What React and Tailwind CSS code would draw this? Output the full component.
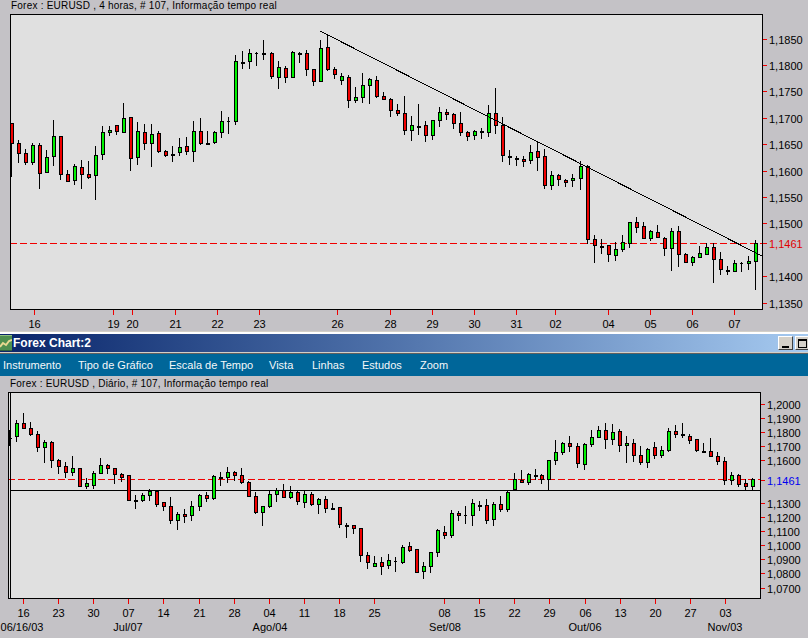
import React from "react";

const T1 = [[36,370,530,370,430,'r'],[57,420,488,430,460,'r'],[78,447,495,460,485,'r'],[99,430,494,436,485,'g'],[120,430,566,436,520,'r'],[141,450,520,472,517,'g'],[162,360,497,409,469,'g'],[183,409,539,409,523,'r'],[204,511,545,523,544,'r'],[225,493,554,499,541,'g'],[246,480,566,502,523,'r'],[267,483,536,523,530,'r'],[288,438,599,466,526,'g'],[309,378,479,397,463,'g'],[330,379,407,391,397,'g'],[351,376,404,376,394,'r'],[372,309,398,355,397,'g'],[393,352,512,352,475,'r'],[414,366,494,394,472,'g'],[435,373,449,397,430,'r'],[456,372,500,403,430,'g'],[477,394,460,400,454,'r'],[498,451,470,454,466,'r'],[519,438,485,461,461,'d'],[540,414,467,442,457,'g'],[561,411,464,439,454,'r'],[582,363,485,394,454,'g'],[603,354,434,394,430,'r'],[624,393,434,428,428,'d'],[645,394,431,397,427,'g'],[666,333,413,364,397,'g'],[687,351,402,364,364,'t'],[708,166,374,184,364,'g'],[729,153,206,185,185,'d'],[750,148,206,160,184,'g'],[771,157,197,158,158,'t'],[792,121,179,158,158,'d']];
const T2 = [[6,157,236,160,229,'r'],[27,184,266,202,232,'g'],[48,199,250,205,232,'r'],[69,154,232,157,232,'g'],[90,157,188,158,158,'d'],[111,151,227,160,208,'r'],[132,208,257,208,244,'r'],[153,120,244,145,244,'g'],[174,106,212,142,208,'r'],[195,202,236,208,223,'r'],[216,220,254,229,241,'g'],[237,226,323,232,301,'r'],[258,262,308,292,301,'g'],[279,220,308,256,292,'g'],[300,235,311,238,256,'g'],[321,229,293,241,287,'r'],[342,277,299,289,298,'r'],[363,295,350,298,331,'r'],[384,312,349,331,340,'r'],[405,289,404,340,391,'r'],[426,349,422,376,391,'g'],[447,313,404,378,378,'d'],[468,364,425,376,406,'r'],[489,361,419,361,406,'g'],[510,322,380,337,361,'g'],[531,328,359,337,343,'r'],[552,340,386,343,370,'r'],[573,337,407,370,397,'r'],[594,394,422,397,409,'r'],[615,391,419,394,406,'g'],[636,385,418,392,392,'d'],[657,316,410,340,397,'g'],[678,265,401,340,376,'r'],[699,352,485,376,466,'r'],[720,451,494,467,467,'d'],[741,469,497,473,473,'d'],[762,469,500,476,484,'r'],[783,436,491,457,481,'g'],[804,426,512,454,472,'r']];
const T3 = [[21,58,176,79,166,'r'],[42,124,179,136,166,'g'],[63,133,167,136,148,'r'],[84,148,170,149,155,'r'],[105,133,170,145,151,'g'],[129,94,179,109,145,'g'],[150,106,341,109,328,'r'],[171,316,398,328,346,'r'],[192,327,373,347,347,'d'],[213,346,395,346,373,'r'],[234,337,392,358,376,'g'],[255,316,367,337,358,'g'],[276,277,355,277,340,'g'],[297,261,310,277,290,'r'],[318,277,328,289,325,'r'],[339,300,334,304,325,'g'],[360,285,325,307,322,'r'],[381,322,377,325,355,'r'],[402,294,422,304,355,'g'],[423,288,410,304,373,'r'],[444,369,400,373,397,'r'],[465,379,407,382,397,'g'],[486,348,385,370,382,'g'],[507,340,373,352,373,'g'],[528,340,458,352,388,'r'],[549,366,434,388,418,'r'],[570,408,434,420,420,'d'],[591,390,425,400,424,'g'],[612,395,425,399,399,'t'],[633,379,419,394,400,'g'],[654,331,479,340,394,'g']];
const B1 = [[51,90,155,100,139,'g'],[72,69,118,100,115,'r'],[93,97,139,115,133,'r'],[114,124,185,133,172,'r'],[135,151,218,157,172,'g'],[156,154,233,157,211,'r'],[177,208,251,211,229,'r'],[198,217,263,229,247,'r'],[219,198,257,235,247,'g'],[240,235,290,235,287,'r'],[261,265,296,280,287,'g'],[282,244,296,250,284,'g'],[303,205,250,226,250,'g'],[324,223,251,226,235,'r'],[345,235,281,235,253,'r'],[366,250,275,253,260,'r'],[387,256,331,256,331,'r'],[408,315,356,329,329,'d'],[429,309,335,316,331,'g'],[450,298,333,304,316,'g'],[471,301,350,304,341,'r'],[492,335,362,337,349,'r'],[513,322,401,349,391,'r'],[534,367,419,373,391,'g'],[555,357,398,373,379,'r'],[576,334,392,349,376,'g'],[600,313,362,316,349,'g'],[621,307,335,316,325,'r'],[642,255,331,259,325,'g'],[663,246,287,260,260,'d'],[684,232,278,247,262,'g'],[705,244,272,247,256,'r'],[726,235,281,256,277,'r'],[747,274,322,277,319,'r'],[768,307,371,319,367,'r'],[789,349,407,349,367,'g']];
const B2 = [[0,300,355,313,347,'g'],[21,295,335,301,313,'g'],[42,283,325,301,322,'r'],[63,289,328,307,322,'g'],[84,304,344,307,334,'r'],[105,304,353,313,337,'g'],[126,307,347,313,343,'r'],[147,325,371,328,343,'g'],[168,319,368,328,355,'r'],[189,340,361,353,353,'d'],[210,352,413,352,403,'r'],[231,400,443,404,404,'d'],[252,404,431,406,415,'r'],[273,413,515,415,496,'r'],[294,487,536,496,517,'r'],[315,498,530,520,527,'g'],[336,501,554,517,527,'r'],[357,492,536,511,526,'g'],[378,501,545,514,514,'t'],[399,465,521,472,515,'g'],[420,456,485,469,479,'r'],[441,478,547,478,547,'r'],[462,517,566,529,544,'g'],[483,487,548,487,529,'g'],[504,418,500,421,487,'g'],[525,408,446,427,436,'r'],[546,361,443,370,436,'g'],[567,364,394,370,376,'r'],[588,349,401,376,376,'t'],[609,327,407,340,376,'g'],[630,334,362,344,344,'d'],[651,327,401,346,391,'r'],[672,337,407,343,388,'g'],[693,317,367,343,358,'r'],[714,304,365,307,358,'g'],[735,250,301,268,298,'g'],[756,239,280,270,277,'r'],[777,250,284,253,277,'g'],[798,237,271,255,255,'d']];
const B3 = [[14,252,281,256,268,'r'],[35,210,301,211,268,'g'],[56,150,225,187,211,'g'],[77,157,195,160,187,'g'],[98,138,186,160,169,'r'],[122,160,233,169,220,'r'],[143,160,240,163,223,'g'],[164,120,170,142,163,'g'],[185,108,144,121,142,'g'],[206,99,177,121,148,'r'],[227,102,166,127,148,'g'],[248,118,187,124,166,'r'],[269,138,218,160,166,'g'],[290,147,216,160,196,'r'],[311,168,224,196,217,'r'],[332,175,233,178,217,'g'],[353,156,208,172,196,'r'],[374,168,204,181,196,'g'],[395,114,187,124,181,'g'],[416,105,144,124,131,'r'],[437,99,143,131,131,'d'],[458,133,161,139,151,'r'],[479,148,187,148,181,'r'],[500,160,186,183,183,'d'],[521,144,202,184,199,'r'],[542,186,226,199,214,'r'],[563,201,284,214,271,'r'],[584,247,284,256,271,'g'],[605,253,292,256,281,'r'],[626,268,301,280,289,'r'],[647,265,304,268,287,'g']];

const conv = (arr, ox, oy) => arr.map(([x, hi, lo, t, b, k]) => ({
  cx: Math.floor(ox + x / 3),
  hi: Math.round(oy + hi / 3),
  lo: Math.round(oy + lo / 3),
  t: Math.round(oy + t / 3),
  b: Math.round(oy + b / 3),
  k,
}));

const topCandles = [...conv(T1, 0, 0), ...conv(T2, 270, 0), ...conv(T3, 538, 130)];
const botCandles = [...conv(B1, 0, 390), ...conv(B2, 270, 390), ...conv(B3, 538, 390)];

const RED = "#f00000";
const GREEN = "#00f000";

function Candle({ c }) {
  return (
    <g>
      <rect x={c.cx - 1} y={c.hi} width={1} height={c.lo - c.hi} fill="#000" />
      {c.k === "d" && <rect x={c.cx - 2} y={c.t} width={4} height={2} fill="#000" />}
      {c.k === "t" && <rect x={c.cx - 2} y={c.t} width={3} height={1} fill="#000" />}
      {(c.k === "r" || c.k === "g") && (
        <>
          <rect x={c.cx - 2} y={c.t} width={4} height={c.b - c.t + 1} fill="#000" />
          <rect x={c.cx - 1} y={c.t + 1} width={2} height={Math.max(c.b - c.t - 1, 0)} fill={c.k === "r" ? RED : GREEN} />
        </>
      )}
    </g>
  );
}

function Chart({ y0, height, box, candles, yLabels, xLabels, labelX, tickLen, priceY, extra, over, children }) {
  const [l, t, r, b] = box;
  return (
    <svg width={808} height={height} viewBox={`0 ${y0} 808 ${height}`} shapeRendering="crispEdges" className="block">
      <rect x={l} y={t} width={r - l} height={b - t} fill="#e0e0e0" />
      <line x1={l} x2={r} y1={priceY + 0.5} y2={priceY + 0.5} stroke="#f00000" strokeDasharray="7 3" />
      {extra}
      {candles.map((c, i) => <Candle key={i} c={c} />)}
      {over}
      <rect x={l} y={t} width={r - l} height={b - t} fill="none" stroke="#000" />
      {yLabels.map(([s, y, col]) => (
        <g key={s}>
          <rect x={r + 1} y={y} width={tickLen} height={1} fill={RED} />
          <text x={labelX} y={y + 4.5} fontSize={11} fill={col || "#000"} shapeRendering="auto">{s}</text>
        </g>
      ))}
      {xLabels.map(([s, x]) => (
        <g key={s + x}>
          <rect x={x} y={b + 1} width={1} height={5} fill={RED} />
          <text x={x + 0.5} y={b + 19} fontSize={11} textAnchor="middle" fill="#000" shapeRendering="auto">{s}</text>
        </g>
      ))}
      {children}
    </svg>
  );
}

const topY = [["1,1850",39],["1,1800",65],["1,1750",91],["1,1700",118],["1,1650",144],["1,1600",171],["1,1550",197],["1,1500",223],["1,1461",243,"#e00000"],["1,1400",276],["1,1350",303]];
const topX = [["16",34],["19",113],["20",132],["21",175],["22",217],["23",259],["26",337],["28",390],["29",432],["30",474],["31",516],["02",555],["04",608],["05",650],["06",692],["07",734]];
const botY = [["1,2000",404],["1,1900",418],["1,1800",432],["1,1700",446],["1,1600",460],["1,1461",480,"#0000f0"],["1,1300",503],["1,1200",517],["1,1100",531],["1,1000",545],["1,0900",559],["1,0800",573],["1,0700",588]];
const botX = [["16",23],["23",58],["30",93],["07",128],["14",163],["21",199],["28",234],["04",269],["11",304],["18",339],["25",374],["08",444],["15",479],["22",514],["29",549],["06",585],["13",620],["20",655],["27",690],["03",725]];
const months = [["06/16/03",22],["Jul/07",128],["Ago/04",270],["Set/08",445],["Out/06",585],["Nov/03",725]];

const menu = [["Instrumento","w-[75px]"],["Tipo de Gráfico","w-[91px]"],["Escala de Tempo","w-[100px]"],["Vista","w-[43px]"],["Linhas","w-[50px]"],["Estudos","w-[58px]"],["Zoom","w-[40px]"]];

function AppIcon() {
  return (
    <svg width={12} height={16} viewBox="0 0 12 16" shapeRendering="crispEdges">
      <rect width={12} height={16} fill="#4f8f4f" />
      <rect y={0} width={12} height={1} fill="#8fbf7f" />
      <rect y={15} width={12} height={1} fill="#2f5f3f" />
      <polyline points="0,12 3,8 6,10 9,6 12,5" fill="none" stroke="#e8d890" strokeWidth={2} shapeRendering="auto" />
    </svg>
  );
}

export default function App() {
  return (
    <div className="w-[808px] h-[638px] overflow-hidden bg-[#c4c2c6] font-['Liberation_Sans',sans-serif] flex flex-col">
      <div className="h-[14px] pl-[11px] text-[10px] leading-[12px] tracking-[0.22px] text-black whitespace-nowrap">
        Forex : EURUSD , 4 horas, # 107, Informação tempo real
      </div>
      <Chart
        y0={14}
        height={317}
        box={[10, 14, 762, 309]}
        candles={topCandles}
        yLabels={topY}
        xLabels={topX}
        labelX={769}
        tickLen={4}
        priceY={243}
        over={<line x1={320} y1={31} x2={762} y2={256} stroke="#000" />}
      />
      <div className="h-px bg-[#d4d0c8]" />
      <div className="h-[2px] bg-white" />
      <div className="h-[18px] flex items-center justify-between bg-gradient-to-r from-[#0a246a] to-[#a6caf0]">
        <div className="flex items-center gap-px">
          <AppIcon />
          <span className="font-bold text-[12px] text-white whitespace-nowrap">Forex Chart:2</span>
        </div>
        <div className="flex items-center gap-[2px] self-start mt-[2px] -mr-[2px]">
          <div className="w-[15px] h-[14px] bg-[#d4d0c8] border-t border-l border-t-white border-l-white border-r border-b border-r-[#404040] border-b-[#404040] flex items-end justify-center pb-[1px]">
            <div className="w-[7px] h-[2px] bg-black" />
          </div>
          <div className="w-[15px] h-[14px] bg-[#d4d0c8] border-t border-l border-t-white border-l-white border-r border-b border-r-[#404040] border-b-[#404040] flex items-center justify-center">
            <div className="w-[9px] h-[9px] border border-t-2 border-black" />
          </div>
        </div>
      </div>
      <div className="h-px bg-[#d4d0c8]" />
      <div className="h-px bg-[#606060]" />
      <div className="h-[22px] bg-[#006699] flex items-center pl-[3px] text-[11px] text-[#f4f8fa] whitespace-nowrap">
        {menu.map(([m, w]) => <span key={m} className={w}>{m}</span>)}
      </div>
      <div className="h-[15px] pl-[10px] pt-[2px] text-[10px] leading-[12px] tracking-[0.22px] text-black whitespace-nowrap">
        Forex : EURUSD , Diário, # 107, Informação tempo real
      </div>
      <Chart
        y0={391}
        height={247}
        box={[8, 392, 760, 598]}
        candles={botCandles}
        yLabels={botY}
        xLabels={botX}
        labelX={767}
        tickLen={4}
        priceY={479}
        extra={
          <g>
            <rect x={10} y={392} width={1} height={206} fill="#000" />
            <rect x={10} y={490} width={750} height={1} fill="#000" />
            <rect x={9} y={430} width={2} height={16} fill="#000" />
            <rect x={9} y={438} width={3} height={1} fill="#000" />
          </g>
        }
      >
        {months.map(([s, x]) => (
          <text key={s} x={x} y={631} fontSize={11} textAnchor="middle" fill="#000" shapeRendering="auto">{s}</text>
        ))}
      </Chart>
    </div>
  );
}
